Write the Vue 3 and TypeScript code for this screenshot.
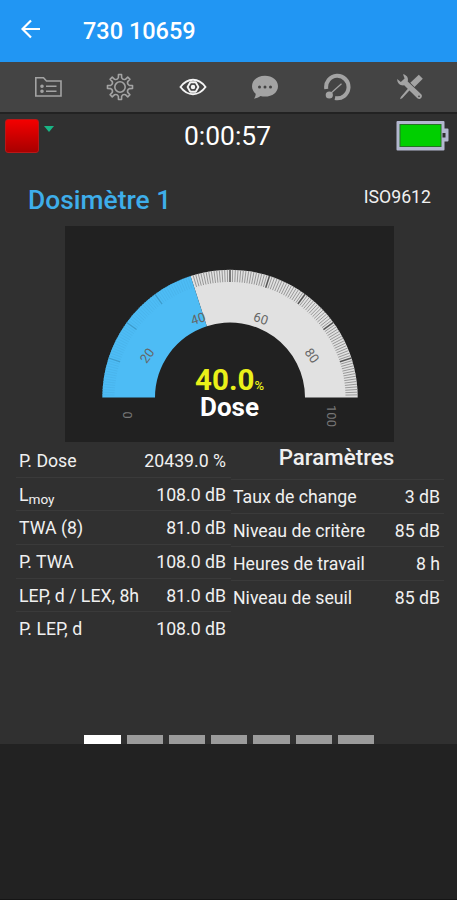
<script setup lang="ts">
interface Row {
  label: string
  sub?: string
  value: string
}

const results: Row[] = [
  { label: 'P. Dose', value: '20439.0 %' },
  { label: 'L', sub: 'moy', value: '108.0 dB' },
  { label: 'TWA (8)', value: '81.0 dB' },
  { label: 'P. TWA', value: '108.0 dB' },
  { label: 'LEP, d / LEX, 8h', value: '81.0 dB' },
  { label: 'P. LEP, d', value: '108.0 dB' },
]

const settings: Row[] = [
  { label: 'Taux de change', value: '3 dB' },
  { label: 'Niveau de critère', value: '85 dB' },
  { label: 'Heures de travail', value: '8 h' },
  { label: 'Niveau de seuil', value: '85 dB' },
]

const dose = 40
const cx = 165
const cy = 171.5
const outer = 127.7
const inner = 75

function point(value: number, radius: number): string {
  const a = Math.PI * (1 - value / 100)
  return `${(cx + radius * Math.cos(a)).toFixed(2)} ${(cy - radius * Math.sin(a)).toFixed(2)}`
}

function band(from: number, to: number): string {
  return `M${point(from, outer)}A${outer} ${outer} 0 0 1 ${point(to, outer)}L${point(to, inner)}A${inner} ${inner} 0 0 0 ${point(from, inner)}Z`
}

function tick(value: number): string {
  return `M${point(value, outer)}L${point(value, 115.5)}`
}

const perMajor = 15
const minorTicks = Array.from({ length: perMajor * 10 + 1 }, (_, i) => i)
  .filter((i) => i % perMajor !== 0)
  .map((i) => (i * 10) / perMajor)
const minorDone = minorTicks.filter((v) => v < dose).map(tick).join('')
const minorLeft = minorTicks.filter((v) => v > dose).map(tick).join('')
const majorDone = [10, 20, 30].map(tick).join('')
const majorLeft = [50, 60, 70, 80, 90].map(tick).join('')

const labels = [
  { text: '0', x: 62, y: 189, angle: -90, dim: true },
  { text: '20', x: 82, y: 129.5, angle: -54, dim: false },
  { text: '40', x: 133, y: 92.5, angle: -18, dim: false },
  { text: '60', x: 196, y: 92.5, angle: 18, dim: false },
  { text: '80', x: 247, y: 129.5, angle: 54, dim: false },
  { text: '100', x: 266.5, y: 190, angle: 90, dim: true },
]

const gearPath = (() => {
  let d = ''
  for (let i = 0; i < 8; i++) {
    const at = (deg: number, r: number) => {
      const a = ((i * 45 + deg) * Math.PI) / 180
      return `${(14 + r * Math.sin(a)).toFixed(2)} ${(14 - r * Math.cos(a)).toFixed(2)}`
    }
    d += `${i ? 'L' : 'M'}${at(-10, 9.4)}L${at(-7, 12.6)}L${at(7, 12.6)}L${at(10, 9.4)}Q${at(22.5, 7.4)} ${at(35, 9.4)}`
  }
  return `${d}Z`
})()
</script>

<template>
  <div class="app">
    <header class="header">
      <svg class="back" viewBox="0 0 20 20"><path d="M19 10H2M10 1.500L1.500 10L10 18.500" /></svg>
      <h1>730 10659</h1>
    </header>

    <nav class="tabs">
      <div class="tab">
        <svg viewBox="0 0 28 28" class="line">
          <path d="M1.800 23V4.800H9.500L12.500 8H27V23Z" />
          <path d="M12 13.300H22.500M12 18.300H22.500" />
          <circle class="fill" cx="8" cy="13.300" r="1" /><circle class="fill" cx="8" cy="18.300" r="1" />
        </svg>
      </div>
      <div class="tab">
        <svg viewBox="0 0 28 28" class="line">
          <path :d="gearPath" stroke-linejoin="round" /><circle cx="14" cy="14" r="5.200" />
        </svg>
      </div>
      <div class="tab active">
        <svg viewBox="0 0 28 28" class="line">
          <path d="M1.500 14C4.800 9.500 9.200 6.800 14 6.800S23.200 9.500 26.500 14C23.200 18.500 18.800 21.200 14 21.200S4.800 18.500 1.500 14Z" />
          <path d="M11.300 9.300H16.700L19.400 14L16.700 18.700H11.300L8.600 14Z" stroke-linejoin="round" />
          <circle class="fill" cx="14" cy="14" r="1.300" />
        </svg>
      </div>
      <div class="tab">
        <svg viewBox="0 0 28 28" class="solid">
          <path d="M14 2.800C21.300 2.800 27 7.300 27 13.200S21.300 23.600 14 23.600C12.400 23.600 10.900 23.400 9.500 23C7.500 24.700 5.500 25.400 3 25.600C4.200 24.200 4.700 22.500 4.700 20.700C2.400 18.800 1 16.100 1 13.200C1 7.300 6.700 2.800 14 2.800Z" />
          <g class="holes"><circle cx="8.500" cy="14" r="1.500" /><circle cx="14" cy="14" r="1.500" /><circle cx="19.500" cy="14" r="1.500" /></g>
        </svg>
      </div>
      <div class="tab">
        <svg viewBox="0 0 28 28" class="line">
          <path class="thick" d="M3.300 16A11.200 11.200 0 1 1 12 25" />
          <path class="thin" d="M7 21L18.500 10.800" />
          <circle class="fill" cx="6.300" cy="22" r="2.800" />
        </svg>
      </div>
      <div class="tab">
        <svg viewBox="0 0 28 28" class="solid">
          <path d="M22.800 1.800L26.800 5.800L18.500 14L14.300 9.800ZM13.300 14L15 15.700L6.200 25.300L4 26.200L4.800 24Z" />
          <path d="M7 1.300C10.900 1.900 12.800 5.200 11.700 8.600L25.200 21.200C27.500 23.500 24 27.700 21.300 25.200L8.200 12.300C4.500 12.900 1 10.200 1.200 5.900L4.800 9L8.600 5.500Z" />
          <circle class="hole" cx="23" cy="23.300" r=".9" />
        </svg>
      </div>
    </nav>

    <main class="screen">
      <section class="status">
        <div class="record">
          <span class="stop"></span>
          <svg viewBox="0 0 10 6"><path d="M0 0H10L5 6Z" /></svg>
        </div>
        <time>0:00:57</time>
        <svg class="battery" viewBox="0 0 53 32">
          <path class="shell" d="M1.500 2H47.500V9.500H51.500V20.500H47.500V29.500H1.500Z" />
          <rect class="charge" x="4" y="4.500" width="41" height="22" />
          <rect class="slot" x="46.500" y="13" width="3" height="4.500" />
        </svg>
      </section>

      <section class="title">
        <h2>Dosimètre 1</h2>
        <span>ISO9612</span>
      </section>

      <section class="gauge">
        <svg viewBox="0 0 329 216">
          <path class="rest" :d="band(dose, 100)" />
          <path class="done" :d="band(0, dose)" />
          <path class="tick-done" :d="minorDone" />
          <path class="tick-done major" :d="majorDone" />
          <path class="tick-rest" :d="minorLeft" />
          <path class="tick-major" :d="majorLeft" />
          <text
            v-for="l in labels"
            :key="l.text"
            class="scale"
            :class="{ dim: l.dim }"
            dy="4.600"
            :transform="`translate(${l.x} ${l.y}) rotate(${l.angle})`"
          >{{ l.text }}</text>
        </svg>
        <div class="readout">
          <div class="reading">40.0<span>%</span></div>
          <div class="name">Dose</div>
        </div>
      </section>

      <section class="data">
        <dl class="results">
          <div v-for="r in results" :key="r.label" class="row">
            <dt>{{ r.label }}<small v-if="r.sub">{{ r.sub }}</small></dt>
            <dd>{{ r.value }}</dd>
          </div>
        </dl>
        <div class="settings">
          <h3>Paramètres</h3>
          <dl>
            <div v-for="r in settings" :key="r.label" class="row">
              <dt>{{ r.label }}</dt>
              <dd>{{ r.value }}</dd>
            </div>
          </dl>
        </div>
      </section>

      <div class="pager">
        <i v-for="n in 7" :key="n" :class="{ current: n === 1 }"></i>
      </div>
    </main>
  </div>
</template>

<style>
body {
  background: #222;
}
</style>

<style scoped>
.app {
  width: 457px;
  height: 900px;
  box-sizing: border-box;
  overflow: hidden;
  background: #222;
  border-bottom: 1px solid #151515;
  font-family: Roboto, 'Liberation Sans', sans-serif;
  color: #f0f0f0;
}
h1, h2, h3, dl, dd {
  margin: 0;
}
.header {
  height: 62px;
  box-sizing: border-box;
  display: flex;
  align-items: center;
  padding: 0 21px;
  background: #2196f3;
}
.back {
  width: 20px;
  height: 20px;
  margin-top: -4px;
  fill: none;
  stroke: #fff;
  stroke-width: 2.2;
}
h1 {
  margin-left: 42px;
  font-size: 23.5px;
  font-weight: 500;
  line-height: 30px;
  color: #fff;
}
.tabs {
  height: 52px;
  box-sizing: border-box;
  display: grid;
  grid-template-columns: repeat(6, 72.3px);
  padding: 0 0 0 12px;
  background: #444;
  border-bottom: 2px solid #222;
}
.tab {
  display: flex;
  align-items: center;
  justify-content: center;
  color: #a3a3a3;
}
.tab svg {
  width: 28px;
  height: 28px;
}
.tab.active {
  color: #f4f4f4;
}
.line {
  fill: none;
  stroke: currentColor;
  stroke-width: 1.6;
}
.active .line {
  stroke-width: 1.9;
}
.thick {
  stroke-width: 4;
}
.thin {
  stroke-width: 1.2;
}
.fill, .solid {
  fill: currentColor;
}
.holes, .hole {
  fill: #444;
}
.screen {
  height: 630px;
  background: #303030;
  display: flex;
  flex-direction: column;
}
.status {
  height: 43px;
  display: grid;
  grid-template-columns: 100px 1fr 100px;
  align-items: center;
}
.record {
  display: flex;
  align-items: flex-start;
  gap: 5px;
  padding-left: 5px;
}
.stop {
  width: 34px;
  height: 34px;
  box-sizing: border-box;
  border: 1px solid #b81818;
  border-radius: 3px;
  background: linear-gradient(#f40000, #a80000);
}
.record svg {
  width: 10px;
  height: 6px;
  margin-top: 7px;
  fill: #19b585;
}
time {
  text-align: center;
  font-size: 26.4px;
  line-height: 32px;
  padding-right: 2px;
  color: #fff;
}
.battery {
  width: 53px;
  height: 32px;
  justify-self: end;
  margin-right: 8px;
}
.shell {
  fill: #b3b7cf;
  stroke: #b3b7cf;
  stroke-width: 2;
  stroke-linejoin: round;
}
.charge {
  fill: #00cf00;
  stroke: #267126;
}
.slot {
  fill: #303030;
}
.title {
  height: 69px;
  box-sizing: border-box;
  display: flex;
  justify-content: space-between;
  padding: 27px 26px 0 28px;
}
h2 {
  font-size: 26.4px;
  font-weight: 500;
  line-height: 32px;
  color: #3eaeea;
}
.title span {
  font-size: 17.7px;
  line-height: 26px;
}
.gauge {
  width: 329px;
  height: 216px;
  margin-left: 65px;
  background: #212121;
  display: grid;
}
.gauge svg {
  grid-area: 1 / 1;
  display: block;
  width: 329px;
  height: 216px;
}
.rest {
  fill: #e1e1e1;
}
.done {
  fill: #4dbcf5;
}
.tick-rest {
  stroke: #8f8f8f;
  stroke-width: 0.9;
}
.tick-major {
  stroke: #555;
  stroke-width: 1.5;
}
.tick-done {
  stroke: #49b3ea;
  stroke-width: 0.8;
}
.tick-done.major {
  stroke: #3d9bcb;
  stroke-width: 1.2;
}
.scale {
  font-size: 13px;
  fill: #666;
  text-anchor: middle;
}
.scale.dim {
  fill: #777;
}
.readout {
  grid-area: 1 / 1;
  align-self: end;
  text-align: center;
  padding-bottom: 22px;
  font-weight: 700;
}
.reading {
  font-size: 29.5px;
  line-height: 27px;
  color: #eaf019;
}
.reading span {
  font-size: 13px;
  line-height: 13px;
  font-weight: 500;
}
.name {
  font-size: 26px;
  line-height: 26px;
  color: #fff;
}
.data {
  display: grid;
  grid-template-columns: 215px 213px;
  padding: 2px 0 0 16px;
}
.row {
  height: 33.7px;
  box-sizing: border-box;
  display: flex;
  justify-content: space-between;
  border-bottom: 1px solid #3a3a3a;
  font-size: 17.7px;
  line-height: 35px;
  white-space: nowrap;
}
.results .row {
  padding: 0 5px 0 3px;
}
.results .row:last-child,
.settings .row:last-child {
  border-bottom-color: transparent;
}
small {
  font-size: 13.6px;
  line-height: 14px;
  position: relative;
  top: 3px;
}
.settings .row {
  padding: 0 4px 0 2px;
}
h3 {
  height: 36px;
  box-sizing: border-box;
  border-bottom: 1px solid #3a3a3a;
  font-size: 22.3px;
  font-weight: 500;
  line-height: 26px;
  text-align: center;
  padding-right: 2px;
}
.pager {
  display: flex;
  gap: 6px;
  margin-top: auto;
  padding-left: 84.3px;
}
.pager i {
  width: 36.3px;
  height: 9.5px;
  background: #9b9b9b;
}
.pager .current {
  background: #fff;
}
</style>
